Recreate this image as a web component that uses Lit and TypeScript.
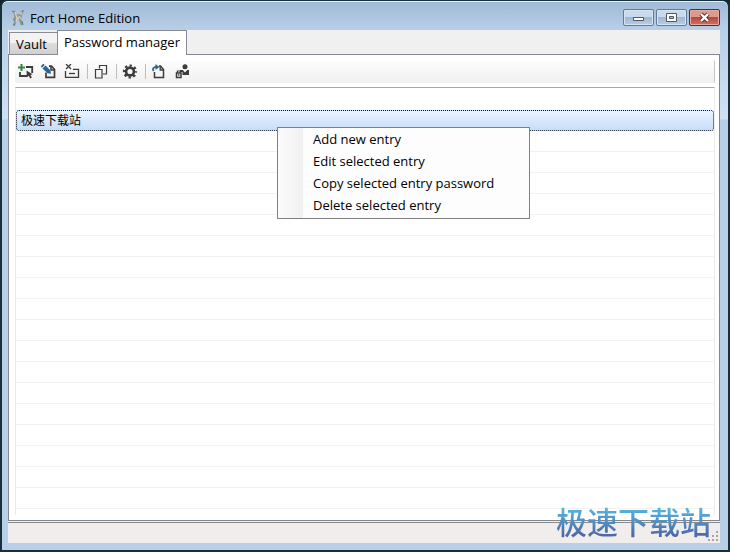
import { LitElement, html, svg, css, type TemplateResult } from "lit";
import { customElement, property, state } from "lit/decorators.js";
import { classMap } from "lit/directives/class-map.js";

const dark = "#3b3b3b";

const icons: Record<string, TemplateResult> = {
  add: svg`
    <path d="M3.500 0v7M0 3.500h7" stroke="#3f7f45" stroke-width="2"/>
    <path d="M8 3h6.200v6M2 8v4h7" stroke=${dark} stroke-width="1.800"/>
    <path d="M8.500 6.500l6 3.800-2 .6 1.400 2.600-1.800.9-1.300-2.700-2 1.500z" fill=${dark}/>`,
  edit: svg`
    <path d="M5 8.500v4.800h8.500V5.500L10.500 2.200H8" stroke=${dark} stroke-width="1.700"/>
    <path d="M10 2v4h4" stroke=${dark} stroke-width="1.500"/>
    <path d="M4.500 1.500l5 5 .5 3.300-3.500-.6-5-4.700z" fill="#2b6596"/>
    <path d="M.3 3L3 .3" stroke="#2b6596" stroke-width="1.800"/>`,
  remove: svg`
    <path d="M2 0l5 5M7 0L2 5" stroke=${dark} stroke-width="1.300"/>
    <path d="M1.500 7v6.300h13V5.300H9" stroke=${dark} stroke-width="1.300"/>
    <path d="M5 9.500h6" stroke=${dark} stroke-width="1.300"/>`,
  copy: svg`
    <path d="M6.500 4.500V1.500h7v8.500H10" stroke=${dark} stroke-width="1.200"/>
    <path d="M2.500 5.500h6.500v8.500h-6.500z" stroke=${dark} stroke-width="1.200"/>`,
  gear: svg`
    <circle cx="8" cy="7.500" r="3.900" stroke=${dark} stroke-width="2.600"/>
    <circle cx="8" cy="7.500" r="6" stroke=${dark} stroke-width="2.200" stroke-dasharray="2.400 2.312" stroke-dashoffset="1.200"/>`,
  restore: svg`
    <path d="M3.500 8v5.500h9V5.500L9.500 2H8" stroke=${dark} stroke-width="1.500"/>
    <path d="M9.200 2v4h3.800" stroke=${dark} stroke-width="1.300"/>
    <path d="M2.500 7C1 4.500 2.500 2.800 6 2.800" stroke="#2b6596" stroke-width="1.800"/>
    <path d="M4.500 0l4 3-4 3z" fill="#2b6596"/>`,
  user: svg`
    <circle cx="11" cy="2.800" r="2.500" fill=${dark}/>
    <path d="M6 6h2.800l2.200 2.500L13.200 6H15v5H8.500V8H6z" fill=${dark}/>
    <path d="M2.500 9h4.500v4.500H2.500z" stroke=${dark} stroke-width="1.500"/>
    <path d="M3.300 9V7h3v2" stroke=${dark} stroke-width="1.100"/>
    <path d="M4.800 10v2" stroke=${dark}/>`,
};

@customElement("tool-bar")
export class ToolBar extends LitElement {
  static styles = css`
    :host {
      display: flex;
      align-items: stretch;
      height: 23px;
      border-right: 1px solid #c4c4c4;
      border-radius: 2px;
      background: linear-gradient(#fdfdfd, #f0f0f0);
    }
    .tool {
      display: block;
      width: 23px;
      padding: 0 4px 0 3px;
      border: 0;
      background: none;
    }
    .icon {
      display: block;
      width: 16px;
      height: 16px;
    }
    .separator {
      width: 1px;
      margin: 4px 2px 4px 3px;
      background: #bdbdbd;
    }
  `;

  private groups = [
    [["add", "Add new entry"], ["edit", "Edit selected entry"], ["remove", "Delete selected entry"]],
    [["copy", "Copy selected entry password"]],
    [["gear", "Settings"]],
    [["restore", "Restore"], ["user", "Change password"]],
  ];

  render() {
    return this.groups.map(
      (group, i) => html`
        ${i ? html`<span class="separator"></span>` : ""}
        ${group.map(
          ([name, label]) => html`<button class="tool" aria-label=${label}>
            <svg class="icon" viewBox="0 0 16 16" fill="none">${icons[name]}</svg>
          </button>`
        )}
      `
    );
  }
}

@customElement("entry-list")
export class EntryList extends LitElement {
  @property({ attribute: false }) entries: string[] = [];

  static styles = css`
    :host {
      display: block;
      box-sizing: border-box;
      border: 1px solid #ececec;
      border-top-color: #a5a8ab;
      border-bottom: 0;
      background: repeating-linear-gradient(#fff 0 20px, #f2f2f2 20px 21px) 0 22px no-repeat;
    }
    .table {
      width: 100%;
      border-collapse: separate;
      border-spacing: 0;
      table-layout: fixed;
    }
    .head {
      height: 22px;
      padding: 0;
    }
    .cell {
      box-sizing: border-box;
      height: 21px;
      padding: 0 4px;
      border: 1px dotted #101828;
      border-radius: 3px;
      background: linear-gradient(#eaf3ff, #c6ddf8);
      font-size: 12px;
      line-height: 16px;
    }
  `;

  render() {
    return html`<table class="table">
      <thead><tr><th class="head" scope="col" aria-label="Entry"></th></tr></thead>
      <tbody>${this.entries.map((e) => html`<tr><td class="cell">${e}</td></tr>`)}</tbody>
    </table>`;
  }
}

@customElement("context-menu")
export class ContextMenu extends LitElement {
  static styles = css`
    :host {
      box-sizing: border-box;
      width: 253px;
      padding: 1px;
      border: 1px solid #808080;
      background: linear-gradient(90deg, #fcfcfc, #f0f0f0) 0 0 / 25px 100% no-repeat #fdfdfd;
    }
    .item {
      display: block;
      width: 100%;
      height: 22px;
      padding: 0 0 2px 34px;
      border: 0;
      background: none;
      color: #000;
      font: inherit;
      text-align: left;
    }
  `;

  private items = ["Add new entry", "Edit selected entry", "Copy selected entry password", "Delete selected entry"];

  render() {
    return this.items.map((label) => html`<button class="item" role="menuitem">${label}</button>`);
  }
}

@customElement("app-root")
export class AppRoot extends LitElement {
  @state() private tab = "Password manager";

  static styles = css`
    :host {
      display: block;
      background: #10272f;
      color: #000;
      font: 13px/16px "Open Sans", "Noto Sans CJK SC", sans-serif;
    }
    .window {
      position: relative;
      box-sizing: border-box;
      display: flex;
      flex-direction: column;
      height: 100vh;
      padding: 0 8px 7px 6px;
      border: 2px solid #17303a;
      border-top-width: 1px;
      border-radius: 7px 7px 0 0;
      background: linear-gradient(#9fb9d5, #b9cfe8 29px, #cfe1f3 118px, #b8cfe8 119px);
      box-shadow: inset 0 1px #e5eef8;
    }
    .title {
      display: flex;
      align-items: center;
      height: 29px;
      padding: 4px 0 0 2px;
      box-sizing: border-box;
    }
    .logo {
      width: 16px;
      height: 18px;
      margin-right: 4px;
    }
    .name {
      flex: 1;
      margin: 0;
      font-size: 13px;
      font-weight: 400;
    }
    .controls {
      display: flex;
      gap: 2px;
    }
    .control {
      box-sizing: border-box;
      width: 31px;
      height: 17px;
      padding: 0;
      border: 1px solid #617b9b;
      border-radius: 2px;
      background: linear-gradient(#c9daed 0 45%, #9fb7d2 50%, #b9cee5);
      box-shadow: inset 0 0 0 1px #d5e3f2;
    }
    .close {
      border-color: #67262a;
      background: linear-gradient(#dd9a90 0 45%, #bb4839 50%, #cf7360);
      box-shadow: inset 0 0 0 1px #e5aaa0;
    }
    .glyph {
      display: block;
      margin: auto;
      width: 13px;
      height: 11px;
    }
    .client {
      flex: 1;
      display: flex;
      flex-direction: column;
      min-height: 0;
      background: #f0f0f0;
    }
    .tabs {
      display: flex;
      align-items: flex-end;
      height: 25px;
      padding-left: 1px;
      margin-bottom: -1px;
      z-index: 1;
    }
    .tab {
      box-sizing: border-box;
      height: 23px;
      padding: 0 10px 0 6px;
      border: 1px solid #898c95;
      border-right: 0;
      background: linear-gradient(#f3f3f3 0 45%, #dedede 50%, #d0d0d0);
      color: #000;
      font: inherit;
    }
    .active {
      height: 25px;
      padding: 0 6px 2px;
      border-right: 1px solid #898c95;
      border-bottom: 0;
      background: #fff;
    }
    .panel {
      flex: 1;
      display: flex;
      flex-direction: column;
      gap: 4px;
      min-height: 0;
      padding: 5px 4px 5px 6px;
      border: 1px solid #848790;
      background: #fff;
    }
    .list {
      flex: 1;
    }
    .status {
      display: flex;
      justify-content: flex-end;
      align-items: flex-end;
      box-sizing: border-box;
      height: 21px;
      margin-top: 1px;
      border-top: 1px solid #8b8b8b;
      background: #f0edec;
    }
    .grip {
      width: 12px;
      height: 12px;
      margin: 1px;
    }
    .menu {
      position: absolute;
      left: 275px;
      top: 126px;
    }
    .watermark {
      position: absolute;
      right: 17px;
      bottom: 6px;
      background: linear-gradient(#55b9e2 20%, #4d69a8 80%);
      background-clip: text;
      -webkit-background-clip: text;
      color: transparent;
      font: 500 31px/46px "Noto Sans CJK SC", sans-serif;
    }
  `;

  render() {
    return html`<main class="window">
      <header class="title">
        <svg class="logo" viewBox="0 0 16 18" fill="none">
          <path d="M4 2l2 5 5-1 1-4M5 6l1 5-2 5M11 6l-1 5 2 5" stroke="#8f9893" stroke-width="2.400"/>
          <path d="M5 3l2 6-1 4M9 7l2 3M11 3v3" stroke="#d8d3b3" stroke-width="1.300"/>
          <path d="M2 2l2 1M4 9v3M3 16h2M12 12l1 4M12 2h2" stroke="#65706c"/>
        </svg>
        <h1 class="name">Fort Home Edition</h1>
        <div class="controls">
          <button class="control" aria-label="Minimize">
            <svg class="glyph" viewBox="0 0 13 11"><path d="M1.500 5.500h10v3h-10z" fill="#fff" stroke="#4d5966"/></svg>
          </button>
          <button class="control" aria-label="Maximize">
            <svg class="glyph" viewBox="0 0 13 11"><path d="M1.500 1.500h10v8h-10z" fill="#fff" stroke="#4d5966"/><path d="M4.500 4.500h4v2h-4z" fill="#a9bfd8" stroke="#4d5966"/></svg>
          </button>
          <button class="control close" aria-label="Close">
            <svg class="glyph" viewBox="0 0 13 11"><path d="M3 2l7 7M10 2L3 9" stroke="#4e3035" stroke-width="4.200"/><path d="M3 2l7 7M10 2L3 9" stroke="#fff" stroke-width="2.400"/></svg>
          </button>
        </div>
      </header>
      <section class="client">
        <nav class="tabs" role="tablist">
          ${["Vault", "Password manager"].map(
            (t) => html`<button
              role="tab"
              class=${classMap({ tab: true, active: t === this.tab })}
              aria-selected=${t === this.tab}
              @click=${() => (this.tab = t)}
            >${t}</button>`
          )}
        </nav>
        <div class="panel">
          <tool-bar></tool-bar>
          <entry-list class="list" .entries=${["极速下载站"]}></entry-list>
        </div>
        <footer class="status">
          <svg class="grip" viewBox="0 0 12 12" fill="#aaa69f">
            <path d="M9 1h2v2H9zM5 5h2v2H5zM9 5h2v2H9zM1 9h2v2H1zM5 9h2v2H5zM9 9h2v2H9z"/>
          </svg>
        </footer>
      </section>
      <context-menu class="menu" role="menu"></context-menu>
      <div class="watermark">极速下载站</div>
    </main>`;
  }
}
